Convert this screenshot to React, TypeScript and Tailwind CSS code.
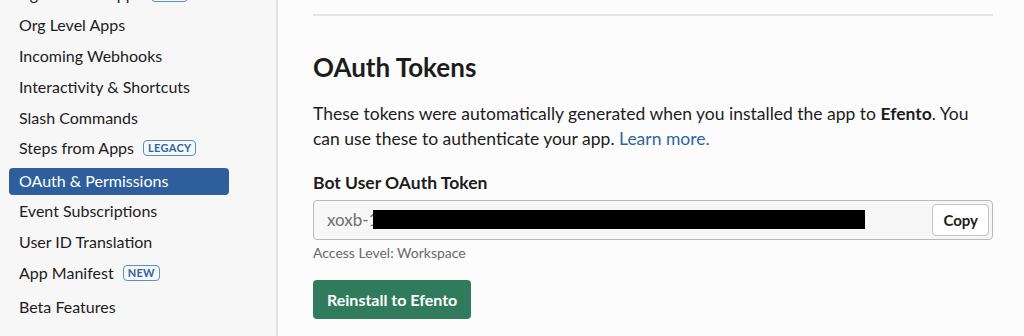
import React from 'react';

type NavItem = { label: string; badge?: string; active?: boolean };

const navItems: NavItem[] = [
  { label: 'Agents & AI Apps', badge: 'NEW' },
  { label: 'Org Level Apps' },
  { label: 'Incoming Webhooks' },
  { label: 'Interactivity & Shortcuts' },
  { label: 'Slash Commands' },
  { label: 'Steps from Apps', badge: 'LEGACY' },
  { label: 'OAuth & Permissions', active: true },
  { label: 'Event Subscriptions' },
  { label: 'User ID Translation' },
  { label: 'App Manifest', badge: 'NEW' },
];

const Badge: React.FC<{ text: string }> = ({ text }) => (
  <span className="ml-[9px] flex h-[16px] items-center rounded-[4px] border border-[#5b8fc7] px-[4px] text-[11px] font-bold tracking-[0.3px] text-[#2e64a3]">
    {text}
  </span>
);

// jagged marker-style redaction over the token
const Redaction: React.FC = () => {
  const w = 492;
  const top: string[] = [];
  const bottom: string[] = [];
  for (let x = 0; x <= w; x += 6) {
    top.push(`${x},${1 + ((x * 7) % 3)}`);
    bottom.push(`${w - x},${20 + ((x * 5) % 3)}`);
  }
  return (
    <svg width={w} height={23} viewBox={`0 0 ${w} 23`} className="ml-[4px] shrink-0">
      <polygon points={[...top, ...bottom].join(' ')} fill="#000" />
    </svg>
  );
};

const Sidebar: React.FC = () => (
  <aside className="w-[278px] shrink-0 border-r-2 border-[#e4e4e4] bg-[#f7f7f7] pl-[9px] pr-[47px]">
    <div className="-mt-[21px]">
      {navItems.map((item) => (
        <div
          key={item.label}
          className={
            item.active
              ? 'mt-[4px] mb-[1px] flex h-[27px] items-center rounded-[4px] bg-[#2e5f9c] px-[10px] text-[16px] text-white'
              : 'flex h-[30.8px] items-center px-[10px] text-[16px] text-[#1d1c1d]'
          }
        >
          <span>{item.label}</span>
          {item.badge && <Badge text={item.badge} />}
        </div>
      ))}
      <div className="mt-[3px] flex h-[30.8px] items-center px-[10px] text-[16px] text-[#1d1c1d]">
        Beta Features
      </div>
    </div>
  </aside>
);

const Main: React.FC = () => (
  <main className="flex-1 bg-[#fcfcfc] pl-[35px] pr-[31px]">
    <div className="mt-[14px] h-[2px] bg-[#e6e6e6]" />
    <h2 className="mt-[35px] text-[26px] font-bold leading-[32px] text-[#1d1c1d]">OAuth Tokens</h2>
    <p className="mt-[18px] text-[17.5px] leading-[25px] text-[#1d1c1d]">
      These tokens were automatically generated when you installed the app to <b>Efento</b>. You
      <br />
      can use these to authenticate your app. <a className="text-[#2e64a3]">Learn more.</a>
    </p>
    <div className="mt-[20px] text-[17.5px] font-bold leading-[24px] text-[#1d1c1d]">Bot User OAuth Token</div>
    <div className="mt-[5px] flex h-[40px] items-center rounded-[4px] border border-[#b9b9b9] bg-[#f7f7f7] pl-[13px] pr-[3px]">
      <span className="text-[17px] text-[#6e6e6e]">xoxb-1</span>
      <span className="-ml-[10px] flex items-center">
        <Redaction />
      </span>
      <button className="ml-auto h-[32px] rounded-[4px] border border-[#c4c4c4] bg-white px-[10px] text-[15px] font-bold text-[#1d1c1d]">
        Copy
      </button>
    </div>
    <div className="mt-[3px] text-[14px] leading-[20px] text-[#696969]">Access Level: Workspace</div>
    <button className="mt-[17px] h-[39px] rounded-[4px] bg-[#2f7b5b] px-[14px] text-[16px] font-bold text-white">
      Reinstall to Efento
    </button>
  </main>
);

const App: React.FC = () => (
  <div className="flex h-[336px] w-[1024px] overflow-hidden font-['Lato',sans-serif]">
    <Sidebar />
    <Main />
  </div>
);

export default App;
